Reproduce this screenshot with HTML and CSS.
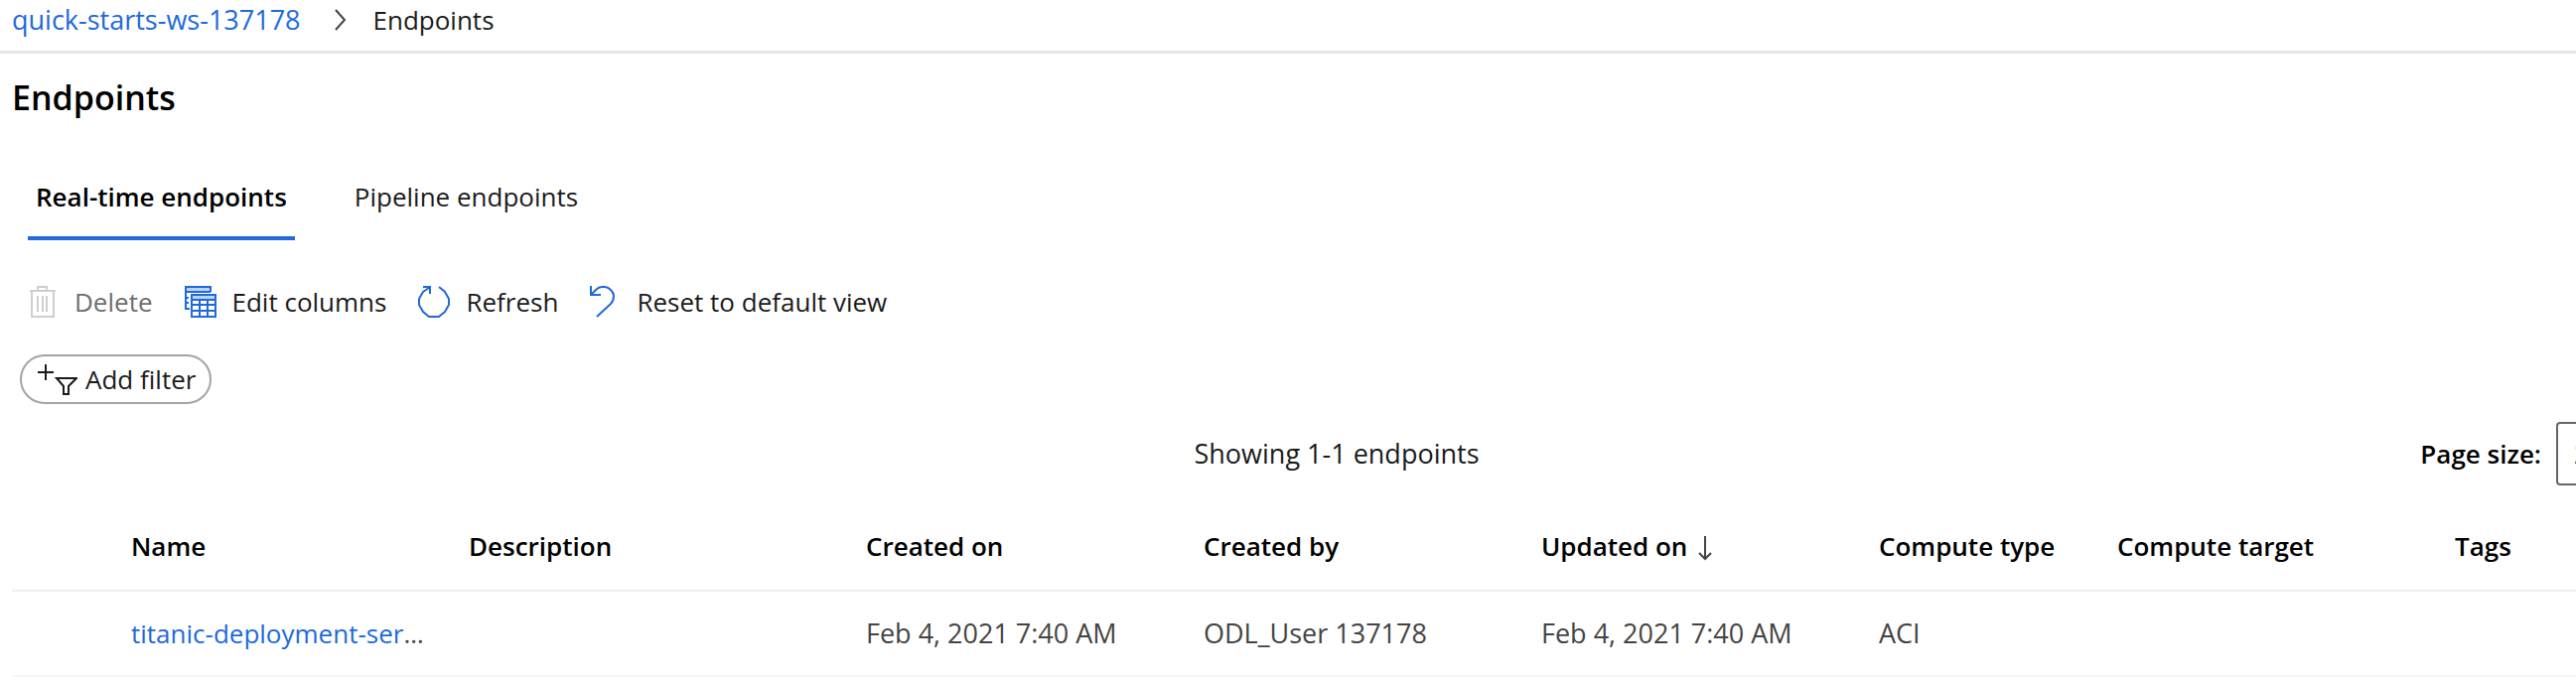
FILE: index.html
```html
<!DOCTYPE html>
<html lang="en">
<head>
<meta charset="utf-8">
<title>Endpoints</title>
<link rel="stylesheet" href="styles.css">
</head>
<body>
<nav class="breadcrumb" aria-label="Breadcrumb">
  <a class="link crumb-link" href="#">quick-starts-ws-137178</a>
  <svg class="chevron" width="12" height="24" viewBox="0 0 12 24" aria-hidden="true"><path d="M1 2l9 10-9 10"/></svg>
  <span>Endpoints</span>
</nav>
<main class="content">
  <h1 class="title">Endpoints</h1>
  <div class="tabs" role="tablist">
    <button class="tab tab-active" role="tab" aria-selected="true">Real-time endpoints</button>
    <button class="tab" role="tab" aria-selected="false">Pipeline endpoints</button>
  </div>
  <div class="toolbar">
    <button class="command command-delete" disabled>
      <svg class="icon" width="32" height="32" viewBox="0 0 32 32" aria-hidden="true"><path d="M3 5h26M11 5V1h9v4M5 5v26h22V5M11 10v16M16 10v16M20 10v16"/></svg>
      Delete
    </button>
    <button class="command command-columns">
      <svg class="icon" width="32" height="32" viewBox="0 0 32 32" aria-hidden="true"><path class="tint" d="M1 1h25v4H1zM7 9h24v4H7z"/><path d="M26 6V1H1v22h4M1 6h25M1 12h3M1 17h3M7 9h24v22H7zM7 14h24M7 19h24M7 25h24M15 14v17M23 14v17"/></svg>
      Edit columns
    </button>
    <button class="command command-refresh">
      <svg class="icon" width="32" height="32" viewBox="0 0 32 32" aria-hidden="true"><path d="M21 1l6 5 4 7v6l-4 7-6 5H11l-6-5-4-7v-6l4-7 6-4M5 1h7v7"/></svg>
      Refresh
    </button>
    <button class="command command-reset">
      <svg class="icon" width="25" height="32" viewBox="0 0 25 32" aria-hidden="true"><path d="M7 31L21 18q3-3 3-8 0-3-3-6-3-3-6-3h-3Q9 1 6 4L1 9M1 0v9h10"/></svg>
      Reset to default view
    </button>
  </div>
  <button class="filter">
    <svg class="icon" width="40" height="32" viewBox="0 0 40 32" aria-hidden="true"><path d="M0 9h16M8 1v16M19 15h20l-8 8v8h-5v-8z"/></svg>
    Add filter
  </button>
  <div class="summary">
    <p class="count">Showing 1-1 endpoints</p>
    <div class="page-size">
      <label class="size-label" for="page-size">Page size:</label>
      <select class="size-select" id="page-size"><option>25</option></select>
    </div>
  </div>
  <table class="grid">
    <colgroup><col class="col-check"><col class="col-mid"><col class="col-wide"><col class="col-mid"><col class="col-mid"><col class="col-mid"><col class="col-narrow"><col class="col-mid"><col></colgroup>
    <thead>
      <tr>
        <td></td>
        <th scope="col">Name</th>
        <th scope="col">Description</th>
        <th scope="col">Created on</th>
        <th scope="col">Created by</th>
        <th scope="col" aria-sort="descending">Updated on <svg class="sort" width="14" height="26" viewBox="0 0 14 26" aria-hidden="true"><path d="M7 1v23M1 18l6 6 6-6"/></svg></th>
        <th scope="col">Compute type</th>
        <th scope="col">Compute target</th>
        <th scope="col">Tags</th>
      </tr>
    </thead>
    <tbody>
      <tr>
        <td></td>
        <td class="name"><a class="link" href="#">titanic-deployment-service</a></td>
        <td></td>
        <td>Feb 4, 2021 7:40 AM</td>
        <td>ODL_User 137178</td>
        <td>Feb 4, 2021 7:40 AM</td>
        <td>ACI</td>
        <td></td>
        <td></td>
      </tr>
    </tbody>
  </table>
</main>
</body>
</html>
```
FILE: styles.css
```css
* { box-sizing: border-box; }

body {
  margin: 0;
  overflow: hidden;
  background: #fff;
  color: #1b1b1b;
  font: 26px/36px "Open Sans", "Noto Sans", sans-serif;
}

button, select { font: inherit; color: inherit; background: none; border: 0; padding: 0; margin: 0; }
svg { flex: none; fill: none; stroke: currentColor; stroke-width: 2; }
.link { color: #2169de; text-decoration: none; }

.breadcrumb {
  display: flex;
  align-items: center;
  padding: 2px 12px 13px;
  border-bottom: 3px solid #e6e6e6;
}
.crumb-link { font-size: 27px; }
.chevron { margin: 0 27px 0 34px; stroke: #444; }

/* The list is wider than the window, so its right edge is cut off. */
.content { margin: 0 -86px 0 12px; }

.title {
  margin: 0;
  padding-top: 20px;
  color: #000;
  font-size: 34px;
  line-height: 48px;
  font-weight: 600;
}

.tabs { display: flex; gap: 52px; padding: 50px 0 0 16px; }
.tab { padding: 8px 8px 22px; border-bottom: 4px solid transparent; }
.tab-active { color: #000; font-weight: 600; border-bottom-color: #2169de; }

.toolbar { display: flex; padding: 44px 0 0 15px; }
.command { display: flex; align-items: center; gap: 16px; margin-right: 32px; }
.command .icon { stroke: #2169de; }
.command .tint { fill: #bcd3f7; stroke: none; }
.command-delete { color: #6e6e6e; }
.command-delete .icon { stroke: #cfcfcf; }
.command-reset { gap: 22px; }

.filter {
  display: flex;
  align-items: center;
  gap: 8px;
  height: 50px;
  margin: 35px 0 0 8px;
  padding: 0 14px 0 16px;
  border: 2px solid #a5a4a2;
  border-radius: 25px;
}

.summary { display: grid; grid-template-columns: 1fr auto 1fr; align-items: center; margin-top: 18px; }
.count { grid-column: 2; margin: 0; font-size: 27px; }
.page-size { display: flex; align-items: center; justify-content: flex-end; gap: 15px; }
.size-label { color: #000; font-weight: 600; }
.size-select { width: 106px; height: 64px; padding: 0 12px; border: 2px solid #666; border-radius: 4px; }

.grid { width: 100%; margin-top: 24px; table-layout: fixed; border-collapse: collapse; }
.col-check { width: 120px; }
.col-mid { width: 340px; }
.col-wide { width: 400px; }
.col-narrow { width: 240px; }
.grid th, .grid td { padding: 0 40px 0 0; text-align: left; white-space: nowrap; overflow: hidden; text-overflow: ellipsis; }
.grid th { padding-bottom: 8px; color: #000; font-weight: 600; }
.grid thead tr { height: 82px; border-bottom: 2px solid #eee; }
.grid tbody tr { height: 86px; border-bottom: 2px solid #f5f5f5; }
.grid tbody td { color: #444; font-size: 27px; }
.grid tbody .name { font-size: 26px; }
.sort { margin-left: 4px; vertical-align: -5px; stroke: #444; }
```
